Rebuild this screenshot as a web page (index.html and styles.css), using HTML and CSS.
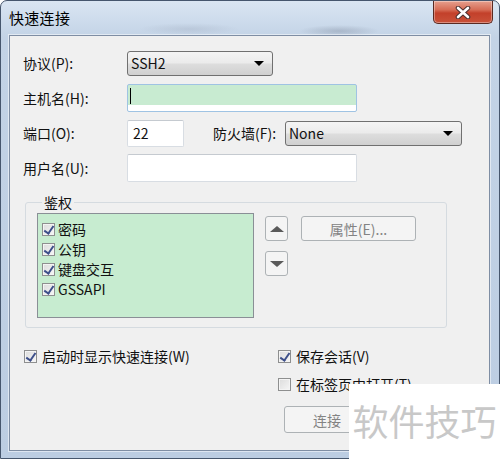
FILE: index.html
```html
<!DOCTYPE html>
<html lang="zh-CN">
<head>
<meta charset="utf-8">
<title>快速连接</title>
<link rel="stylesheet" href="styles.css">
</head>
<body>
<div class="window">
  <div class="titlebar">
    <span class="title">快速连接</span>
    <div class="close">
      <svg width="16" height="13" viewBox="0 0 16 13">
        <path d="M3 2 L13 11 M13 2 L3 11" stroke="#4a3030" stroke-width="4.6" stroke-linecap="round"/>
        <path d="M3 2 L13 11 M13 2 L3 11" stroke="#ffffff" stroke-width="2.6" stroke-linecap="round"/>
      </svg>
    </div>
  </div>
  <div class="client">
    <div class="form">
      <div class="row">
        <span class="label">协议(P):</span>
        <div class="combo w-proto"><span>SSH2</span><i class="arrow"></i></div>
      </div>
      <div class="row">
        <span class="label">主机名(H):</span>
        <div class="edit w-host focus"><span class="caret"></span></div>
      </div>
      <div class="row">
        <span class="label">端口(O):</span>
        <div class="edit w-port"><span>22</span></div>
        <span class="label fw">防火墙(F):</span>
        <div class="combo w-fw"><span>None</span><i class="arrow"></i></div>
      </div>
      <div class="row">
        <span class="label">用户名(U):</span>
        <div class="edit w-host"></div>
      </div>
    </div>

    <fieldset class="group">
      <legend>鉴权</legend>
      <div class="group-body">
        <div class="list">
          <div class="item"><span class="cb on"></span>密码</div>
          <div class="item"><span class="cb on"></span>公钥</div>
          <div class="item"><span class="cb on"></span>键盘交互</div>
          <div class="item"><span class="cb on"></span>GSSAPI</div>
        </div>
        <div class="arrows">
          <div class="btn sq"><i class="tri up"></i></div>
          <div class="btn sq"><i class="tri down"></i></div>
        </div>
        <div class="btn disabled props">属性(E)...</div>
      </div>
    </fieldset>

    <div class="bottom">
      <div class="col-left">
        <div class="crow"><span class="cb on"></span>启动时显示快速连接(W)</div>
      </div>
      <div class="col-right">
        <div class="crow"><span class="cb on"></span>保存会话(V)</div>
        <div class="crow"><span class="cb"></span>在标签页中打开(T)</div>
        <div class="buttons">
          <div class="btn disabled wide">连接</div>
        </div>
      </div>
    </div>
  </div>
  <div class="watermark">软件技巧</div>
</div>
</body>
</html>
```
FILE: styles.css
```css
* { box-sizing: border-box; }
html, body { margin: 0; padding: 0; }
body {
  width: 500px;
  height: 459px;
  background: #ffffff;
  font-family: "Noto Sans CJK SC", "Noto Sans", sans-serif;
  font-size: 14px;
  color: #111;
  overflow: hidden;
}
.window {
  position: relative;
  width: 500px;
  height: 459px;
  border: 1px solid #46566d;
  border-radius: 7px 7px 0 0;
  background: linear-gradient(to bottom, #dae5f2 0, #cddbec 20px, #c3d3e6 36px, #bccde2 100%);
  padding: 0 9px 7px 8px;
  display: flex;
  flex-direction: column;
}
.titlebar {
  height: 34px;
  display: flex;
  justify-content: space-between;
  align-items: flex-start;
  background:
    radial-gradient(ellipse 40px 6px at 330px 30px, rgba(80,90,110,0.25), transparent),
    radial-gradient(ellipse 50px 6px at 180px 28px, rgba(120,130,150,0.18), transparent);
}
.title {
  font-size: 15px;
  line-height: 20px;
  margin-top: 7px;
  color: #000;
  letter-spacing: 0.3px;
}
.close {
  width: 60px;
  height: 23px;
  margin-top: 0;
  margin-right: -3px;
  border: 1px solid #5a2a22;
  border-top: none;
  border-radius: 0 0 5px 5px;
  background: linear-gradient(to bottom, #e6a08e 0, #d66c55 40%, #c3402a 55%, #c9523a 100%);
  box-shadow: inset 0 0 0 1px rgba(255,255,255,0.35);
  display: flex;
  align-items: center;
  justify-content: center;
}
.client {
  flex: 1;
  background: #f0f0f0;
  border: 1px solid #7f8ea4;
  box-shadow: 0 0 0 1px rgba(255,255,255,0.5);
  display: flex;
  flex-direction: column;
}
.form {
  padding: 13px 0 0 13px;
  display: flex;
  flex-direction: column;
  gap: 7px;
}
.row {
  height: 28px;
  display: flex;
  align-items: center;
}
.label {
  width: 104px;
  line-height: 18px;
}
.label.fw {
  width: 72px;
  margin-left: 29px;
  white-space: nowrap;
}
.combo {
  height: 25px;
  border: 1px solid #707070;
  border-radius: 3px;
  background: linear-gradient(to bottom, #f4f4f4 0, #ebebeb 48%, #dddddd 52%, #d0d0d0 100%);
  display: flex;
  align-items: center;
  justify-content: space-between;
  padding: 0 8px 0 3px;
  line-height: 18px;
}
.arrow {
  width: 0;
  height: 0;
  border-left: 5px solid transparent;
  border-right: 5px solid transparent;
  border-top: 5px solid #000;
}
.w-proto { width: 146px; }
.w-fw { width: 177px; }
.edit {
  height: 28px;
  background: #fff;
  border: 1px solid #d8dde3;
  border-top-color: #c5cad0;
  border-radius: 2px;
  display: flex;
  align-items: center;
  padding: 0 4px;
  line-height: 18px;
}
.w-host { width: 230px; }
.w-port { width: 57px; height: 27px; padding-left: 5px; }
.edit.focus {
  border: 1px solid #9fc3e3;
  background: linear-gradient(to bottom, #c8ebd1 0, #c8ebd1 76%, #ffffff 76%);
  padding: 0 0 4px 2px;
  align-items: center;
}
.caret {
  width: 1px;
  height: 16px;
  background: #000;
}
.group {
  margin: 12px 0 0 15px;
  width: 422px;
  height: 134px;
  border: 1px solid #d5dbe0;
  border-radius: 3px;
  padding: 3px 0 0 11px;
  min-width: 0;
}
.group legend {
  padding: 0 2px;
  margin-left: 5px;
  line-height: 16px;
  font-size: 14px;
}
.group-body {
  display: flex;
  align-items: flex-start;
}
.list {
  width: 217px;
  height: 105px;
  border: 1px solid #8a8f96;
  background: #c7ecd0;
  padding: 5px 0 0 4px;
}
.item {
  height: 20px;
  display: flex;
  align-items: center;
  font-size: 14px;
  line-height: 18px;
}
.cb {
  position: relative;
  width: 13px;
  height: 13px;
  border: 1px solid #8e8f8f;
  background: linear-gradient(135deg, #dcdcdc, #f6f6f6);
  box-shadow: inset 0 0 0 1px #f4f4f4;
  margin-right: 3px;
  flex: none;
}
.cb.on::after {
  content: "";
  position: absolute;
  left: 3px;
  top: 0px;
  width: 4px;
  height: 8px;
  border: solid #3d4f8a;
  border-width: 0 2px 2px 0;
  transform: rotate(35deg);
}
.arrows {
  margin: 3px 0 0 11px;
  display: flex;
  flex-direction: column;
  gap: 10px;
}
.btn {
  height: 25px;
  border: 1px solid #707070;
  border-radius: 3px;
  background: linear-gradient(to bottom, #f4f4f4 0, #ebebeb 48%, #dddddd 52%, #d0d0d0 100%);
  display: flex;
  align-items: center;
  justify-content: center;
  line-height: 18px;
}
.btn.sq {
  width: 23px;
  border-color: #adb2b5;
  background: #f4f4f4;
}
.btn.disabled {
  border-color: #adb2b5;
  background: #f4f4f4;
  color: #838383;
}
.props {
  width: 115px;
  margin: 3px 0 0 13px;
}
.tri {
  width: 0;
  height: 0;
  border-left: 7px solid transparent;
  border-right: 7px solid transparent;
}
.tri.up { border-bottom: 6px solid #5a5a5a; }
.tri.down { border-top: 6px solid #5a5a5a; }
.bottom {
  display: flex;
  margin-top: 14px;
  padding-left: 14px;
}
.col-left { width: 254px; }
.col-right {
  display: flex;
  flex-direction: column;
}
.crow {
  height: 28px;
  display: flex;
  align-items: center;
  line-height: 18px;
}
.crow .cb { margin-right: 5px; }
.buttons {
  display: flex;
  gap: 8px;
  margin: 8px 0 0 6px;
}
.btn.wide {
  width: 80px;
  height: 27px;
  justify-content: flex-start;
  padding-left: 28px;
}
.watermark {
  position: absolute;
  right: -1px;
  bottom: -1px;
  width: 151px;
  height: 75px;
  background: #ffffff;
  color: #c8c8c8;
  font-size: 36px;
  line-height: 40px;
  display: flex;
  align-items: center;
  justify-content: center;
  padding-bottom: 4px;
  letter-spacing: 0;
}
```
